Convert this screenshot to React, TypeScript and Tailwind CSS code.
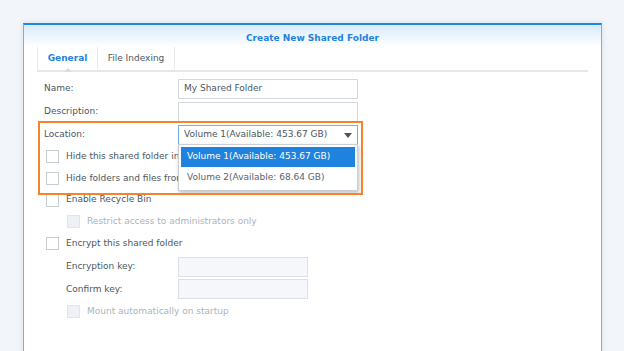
import { ReactNode } from "react"

const font = { fontFamily: '"DejaVu Sans", Verdana, sans-serif' }

function Checkbox({ disabled = false }: { disabled?: boolean }) {
  return (
    <span
      className={
        disabled
          ? "inline-block h-[13px] w-[13px] shrink-0 border border-[#dfe5eb] bg-[#eef2f6]"
          : "inline-block h-[13px] w-[13px] shrink-0 border border-[#c6cdd5] bg-white"
      }
    />
  )
}

function CheckRow({
  label,
  indent = false,
  disabled = false,
  clipped = false,
}: {
  label: string
  indent?: boolean
  disabled?: boolean
  clipped?: boolean
}) {
  return (
    <div className={`flex h-[21.7px] items-center ${indent ? "pl-[43px]" : "pl-[22px]"}`}>
      <Checkbox disabled={disabled} />
      <span
        className={`ml-[7px] whitespace-nowrap ${clipped ? "max-w-[112px] overflow-hidden" : ""} ${
          disabled ? "text-[#abb3bc]" : "text-[#4c5660]"
        }`}
      >
        {label}
      </span>
    </div>
  )
}

function FieldRow({
  label,
  children,
  className = "",
  labelClass = "pl-[20px]",
}: {
  label: string
  children: ReactNode
  className?: string
  labelClass?: string
}) {
  return (
    <div className={`flex h-[20px] items-center ${className}`}>
      <div className={`w-[154px] shrink-0 text-[#4c5660] ${labelClass}`}>{label}</div>
      {children}
    </div>
  )
}

export default function App() {
  return (
    <div className="h-[351px] w-[624px] overflow-hidden bg-[#f2f6fa] text-[9px]" style={font}>
      <div className="relative ml-[23px] mt-[23px] h-[340px] w-[579px] border-x border-t-2 border-x-[#9ea7b1] border-t-[#1f86e0] bg-white shadow-[0_0_6px_rgba(120,150,180,0.25)]">
        {/* header */}
        <div className="flex h-[22px] items-center justify-center bg-gradient-to-b from-[#d8ebfc] to-white pt-[5px] text-[9px] font-bold text-[#1f82de]">
          Create New Shared Folder
        </div>

        {/* tabs */}
        <div className="mx-[13px] flex h-[25px] border-b-2 border-[#e4e7eb]">
          <div className="relative flex w-[61px] items-center justify-center border-l border-r border-[#e8ebee] font-bold text-[#1f82de]">
            General
            <span className="absolute -bottom-[2px] left-[26px] h-0 w-0 border-x-[4px] border-b-[4px] border-x-transparent border-b-[#d9dde2]" />
          </div>
          <div className="flex w-[77px] items-center justify-center border-r border-[#e8ebee] text-[#4c5660]">
            File Indexing
          </div>
        </div>

        {/* form */}
        <div className="flex flex-col pt-[7px]">
          <FieldRow label="Name:">
            <div className="flex h-[20px] w-[180px] items-center border border-[#d3d9df] px-[5px] text-[#4c5660]">
              My Shared Folder
            </div>
          </FieldRow>
          <FieldRow label="Description:" className="mt-[3px]">
            <div className="h-[20px] w-[180px] border border-[#d3d9df]" />
          </FieldRow>
          <FieldRow label="Location:" className="mt-[3px]">
            <div className="flex h-[20px] w-[180px] items-center justify-between border border-[#6fb2ea] pl-[5px] pr-[5px] text-[#4c5660]">
              <span>Volume 1(Available: 453.67 GB)</span>
              <span className="h-0 w-0 border-x-[4px] border-t-[5px] border-x-transparent border-t-[#4c5660]" />
            </div>
          </FieldRow>

          <div className="mt-[1px] flex flex-col">
            <CheckRow label="Hide this shared folder in &quot;My Network Places&quot;" clipped />
            <CheckRow label="Hide folders and files from users without permissions" clipped />
            <CheckRow label="Enable Recycle Bin" />
            <CheckRow label="Restrict access to administrators only" indent disabled />
            <CheckRow label="Encrypt this shared folder" />
          </div>

          <FieldRow label="Encryption key:" labelClass="pl-[42px]" className="mt-[2.5px]">
            <div className="h-[20px] w-[130px] border border-[#dbe0e6] bg-[#f5f7fa]" />
          </FieldRow>
          <FieldRow label="Confirm key:" labelClass="pl-[42px]" className="mt-[2.5px]">
            <div className="h-[20px] w-[130px] border border-[#dbe0e6] bg-[#f5f7fa]" />
          </FieldRow>
          <div className="mt-[1.5px]">
            <CheckRow label="Mount automatically on startup" indent disabled />
          </div>
        </div>

        {/* dropdown list */}
        <div className="absolute left-[154px] top-[119px] w-[180px] border border-[#c9ced4] bg-white p-[2px] shadow-[1px_2px_4px_rgba(0,0,0,0.25)]">
          <div className="flex h-[20px] items-center bg-[#1f82de] pl-[6px] text-white">
            Volume 1(Available: 453.67 GB)
          </div>
          <div className="flex h-[21px] items-center pl-[6px] text-[#5a636c]">
            Volume 2(Available: 68.64 GB)
          </div>
        </div>

        {/* highlight */}
        <div className="pointer-events-none absolute left-[14px] top-[96px] h-[74px] w-[325px] border-2 border-[#f4832c]" />
      </div>
    </div>
  )
}
